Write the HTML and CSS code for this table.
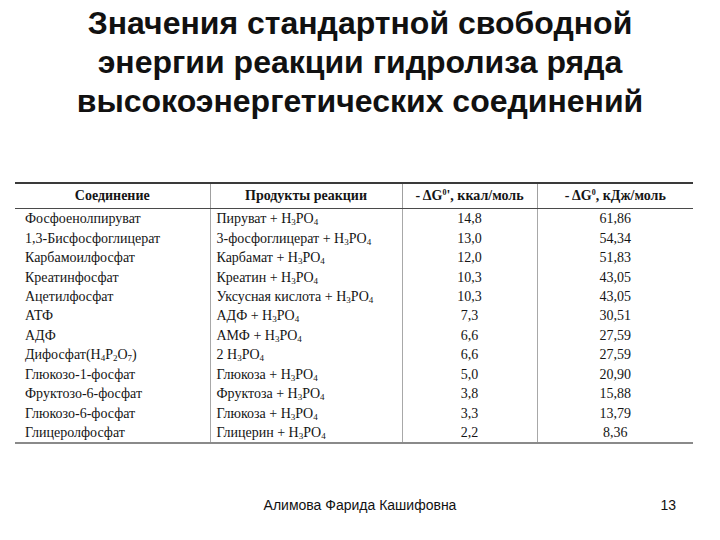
FILE: index.html
```html
<!DOCTYPE html>
<html lang="ru">
<head>
<meta charset="utf-8">
<title>Значения стандартной свободной энергии</title>
<link rel="stylesheet" href="styles.css">
</head>
<body>
<div class="slide">
  <h1 class="title">Значения стандартной свободной<br>энергии реакции гидролиза ряда<br>высокоэнергетических соединений</h1>
  <table class="data">
    <colgroup>
      <col class="c1"><col class="c2"><col class="c3"><col class="c4">
    </colgroup>
    <thead>
      <tr>
        <th>Соединение</th>
        <th>Продукты реакции</th>
        <th>- ΔG<sup>0</sup>', ккал/моль</th>
        <th>- ΔG<sup>0</sup>, кДж/моль</th>
      </tr>
    </thead>
    <tbody>
      <tr><td>Фосфоенолпируват</td><td>Пируват + H<sub>3</sub>PO<sub>4</sub></td><td class="num">14,8</td><td class="num">61,86</td></tr>
      <tr><td>1,3-Бисфосфоглицерат</td><td>3-фосфоглицерат + H<sub>3</sub>PO<sub>4</sub></td><td class="num">13,0</td><td class="num">54,34</td></tr>
      <tr><td>Карбамоилфосфат</td><td>Карбамат + H<sub>3</sub>PO<sub>4</sub></td><td class="num">12,0</td><td class="num">51,83</td></tr>
      <tr><td>Креатинфосфат</td><td>Креатин + H<sub>3</sub>PO<sub>4</sub></td><td class="num">10,3</td><td class="num">43,05</td></tr>
      <tr><td>Ацетилфосфат</td><td>Уксусная кислота + H<sub>3</sub>PO<sub>4</sub></td><td class="num">10,3</td><td class="num">43,05</td></tr>
      <tr><td>АТФ</td><td>АДФ + H<sub>3</sub>PO<sub>4</sub></td><td class="num">7,3</td><td class="num">30,51</td></tr>
      <tr><td>АДФ</td><td>АМФ + H<sub>3</sub>PO<sub>4</sub></td><td class="num">6,6</td><td class="num">27,59</td></tr>
      <tr><td>Дифосфат(H<sub>4</sub>P<sub>2</sub>O<sub>7</sub>)</td><td>2 H<sub>3</sub>PO<sub>4</sub></td><td class="num">6,6</td><td class="num">27,59</td></tr>
      <tr><td>Глюкозо-1-фосфат</td><td>Глюкоза + H<sub>3</sub>PO<sub>4</sub></td><td class="num">5,0</td><td class="num">20,90</td></tr>
      <tr><td>Фруктозо-6-фосфат</td><td>Фруктоза + H<sub>3</sub>PO<sub>4</sub></td><td class="num">3,8</td><td class="num">15,88</td></tr>
      <tr><td>Глюкозо-6-фосфат</td><td>Глюкоза + H<sub>3</sub>PO<sub>4</sub></td><td class="num">3,3</td><td class="num">13,79</td></tr>
      <tr><td>Глицеролфосфат</td><td>Глицерин + H<sub>3</sub>PO<sub>4</sub></td><td class="num">2,2</td><td class="num">8,36</td></tr>
    </tbody>
  </table>
  <div class="footer">
    <span class="spacer"></span>
    <span class="author">Алимова Фарида Кашифовна</span>
    <span class="page">13</span>
  </div>
</div>
</body>
</html>
```

FILE: styles.css
```css
html, body {
  margin: 0;
  padding: 0;
  background: #ffffff;
}

.slide {
  width: 720px;
  height: 540px;
  overflow: hidden;
  display: flex;
  flex-direction: column;
}

.title {
  margin: 0;
  padding-top: 4px;
  font-family: "Liberation Sans", Arial, sans-serif;
  font-weight: bold;
  font-size: 32px;
  line-height: 39px;
  text-align: center;
  color: #111111;
}

.data {
  margin: 61px 0 0 15px;
  width: 678px;
  table-layout: fixed;
  border-collapse: collapse;
  font-family: "Liberation Serif", "Times New Roman", serif;
  font-size: 14px;
  color: #151515;
}

.c1 { width: 195px; }
.c2 { width: 192px; }
.c3 { width: 135px; }
.c4 { width: 156px; }

.data th {
  height: 24px;
  padding: 0;
  font-size: 14px;
  font-weight: bold;
  text-align: center;
  border-top: 2px solid #3a3a3a;
  border-bottom: 1px solid #4a4a4a;
  border-left: 1px solid #a0a0a0;
  white-space: nowrap;
}

.data th:first-child,
.data td:first-child {
  border-left: none;
}

.data td {
  height: 19.45px;
  padding: 0 0 0 6px;
  border-left: 1px solid #a8a8a8;
  white-space: nowrap;
  line-height: 19px;
}

.data td:first-child {
  padding-left: 10px;
}

.data td.num {
  text-align: center;
  padding: 0;
}

.data tbody tr:last-child td {
  border-bottom: 2px solid #8a8a8a;
}

.data sub {
  font-size: 9px;
  vertical-align: -2px;
  line-height: 0;
}

.data sup {
  font-size: 8px;
  vertical-align: 5px;
  line-height: 0;
}

.footer {
  margin-top: 53px;
  display: grid;
  grid-template-columns: 1fr auto 1fr;
  align-items: center;
  padding-right: 44px;
  font-family: "Liberation Sans", Arial, sans-serif;
  font-size: 14px;
  color: #111111;
}

.author {
  padding-left: 44px;
}

.page {
  justify-self: end;
}
```
